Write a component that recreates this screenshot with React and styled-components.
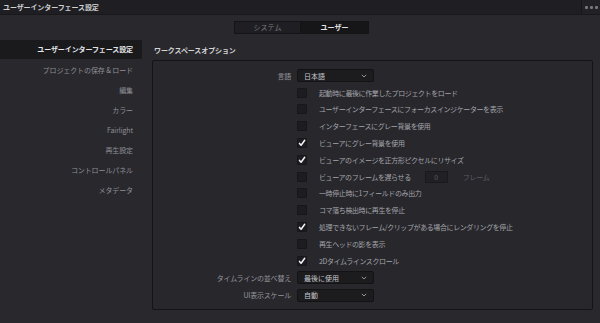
import React from 'react';
import styled, { createGlobalStyle } from 'styled-components';

const GlobalStyle = createGlobalStyle`
  html, body {
    margin: 0;
    padding: 0;
    background: #28282d;
  }

  body {
    font-family: "Noto Sans CJK JP", "Noto Sans", sans-serif;
    color: #a8a8ac;
    width: 600px;
    height: 323px;
    overflow: hidden;
  }
`;

const Window = styled.div`
  display: flex;
  flex-flow: column nowrap;
  width: 600px;
  height: 323px;
  background: #28282d;
`;

const TitleBar = styled.header`
  display: flex;
  align-items: center;
  height: 15px;
  flex: 0 0 15px;
  background: #1f1f23;
  border-bottom: 1px solid #19191c;
  box-sizing: border-box;
`;

const Title = styled.h1`
  flex: 1;
  margin: 0;
  padding-left: 3px;
  font-size: 7px;
  font-weight: 700;
  color: #d0d0d2;
  letter-spacing: -0.1px;
  line-height: 15px;
`;

const MoreButton = styled.div`
  display: flex;
  align-items: center;
  justify-content: center;
  gap: 2px;
  width: 18px;
  height: 100%;
  border-left: 1px solid #18181b;
  background: #222226;

  & span {
    width: 3px;
    height: 3px;
    border-radius: 1px;
    background: #76767c;
  }
`;

const TabRow = styled.div`
  display: flex;
  justify-content: center;
  padding: 6px 0 0 3px;
`;

const Tab = styled.button`
  width: ${({ $wide }) => ($wide ? '68px' : '67px')};
  height: 13px;
  padding: 0;
  border: 1px solid #141416;
  background: ${({ $active }) => ($active ? '#161618' : '#1f1f23')};
  color: ${({ $active }) => ($active ? '#e2e2e4' : '#7c7c82')};
  font-family: inherit;
  font-size: 7px;
  font-weight: ${({ $active }) => ($active ? 700 : 400)};
  line-height: 11px;

  & + & {
    border-left: none;
  }
`;

const Body = styled.div`
  display: flex;
  flex: 1;
  padding-top: 6px;
`;

const Sidebar = styled.nav`
  display: flex;
  flex-flow: column nowrap;
  width: 142px;
  flex: 0 0 142px;
`;

const NavItem = styled.div`
  height: ${({ $active }) => ($active ? '19px' : '20px')};
  margin-bottom: ${({ $active }) => ($active ? '1px' : '0')};
  padding-right: 9px;
  text-align: right;
  font-size: 7px;
  line-height: ${({ $active }) => ($active ? '19px' : '20px')};
  font-weight: ${({ $active }) => ($active ? 700 : 400)};
  color: ${({ $active }) => ($active ? '#e6e6e8' : '#8f8f95')};
  background: ${({ $active }) => ($active ? '#1a1a1d' : 'transparent')};
  letter-spacing: -0.1px;
`;

const Main = styled.main`
  display: flex;
  flex-flow: column nowrap;
  padding-left: 10px;
`;

const SectionTitle = styled.h2`
  margin: 0;
  height: 20px;
  padding-left: 2px;
  font-size: 7px;
  font-weight: 700;
  line-height: 20px;
  color: #d4d4d6;
  letter-spacing: -0.1px;
`;

const Panel = styled.section`
  box-sizing: border-box;
  width: 441px;
  height: 250px;
  padding-top: 6.5px;
  border: 1px solid #141416;
  border-radius: 2px;
  background: #27272c;
`;

const Row = styled.div`
  display: flex;
  align-items: center;
  height: ${({ $tall }) => ($tall ? '17.4px' : '16.8px')};
  gap: 6px;
`;

const Label = styled.span`
  width: 138px;
  flex: 0 0 138px;
  text-align: right;
  font-size: 7px;
  color: #95959b;
  letter-spacing: -0.2px;
`;

const Select = styled.div`
  display: flex;
  align-items: center;
  justify-content: space-between;
  box-sizing: border-box;
  width: 77px;
  height: 13px;
  padding: 0 6px;
  background: #1c1c1f;
  border: 1px solid #131315;
  border-radius: 2px;
  font-size: 7px;
  color: #c6c6ca;
`;

const Check = styled.span`
  display: flex;
  align-items: center;
  justify-content: center;
  box-sizing: border-box;
  width: 10px;
  height: 10px;
  flex: 0 0 10px;
  background: #1d1d21;
  border: 1px solid #17171a;
  border-radius: 1px;
`;

const CheckText = styled.span`
  margin-left: 6px;
  font-size: 7px;
  color: #a4a4aa;
  letter-spacing: -0.4px;
  white-space: nowrap;
`;

const NumberBox = styled.span`
  display: inline-flex;
  align-items: center;
  justify-content: center;
  box-sizing: border-box;
  width: 23px;
  height: 12px;
  margin-left: 8px;
  background: #212125;
  border: 1px solid #1a1a1d;
  font-size: 7px;
  color: #5d5d63;
`;

const Unit = styled.span`
  margin-left: 9px;
  font-size: 7px;
  color: #5d5d63;
  letter-spacing: -0.3px;
`;

const Chevron = () => (
  <svg width="6" height="4" viewBox="0 0 6 4" aria-hidden="true">
    <path d="M0.8 0.8 L3 3 L5.2 0.8" fill="none" stroke="#a0a0a6" strokeWidth="0.9" />
  </svg>
);

const Tick = () => (
  <svg width="8" height="8" viewBox="0 0 8 8" aria-hidden="true">
    <path d="M1.5 4.4 L3.1 6.3 L6.7 1.3" fill="none" stroke="#f4f4f6" strokeWidth="1.5" strokeLinecap="round" strokeLinejoin="round" />
  </svg>
);

const navItems = [
  'ユーザーインターフェース設定',
  'プロジェクトの保存 & ロード',
  '編集',
  'カラー',
  'Fairlight',
  '再生設定',
  'コントロールパネル',
  'メタデータ',
];

const checkOptions = [
  { text: '起動時に最後に作業したプロジェクトをロード', checked: false },
  { text: 'ユーザーインターフェースにフォーカスインジケーターを表示', checked: false },
  { text: 'インターフェースにグレー背景を使用', checked: false },
  { text: 'ビューアにグレー背景を使用', checked: true },
  { text: 'ビューアのイメージを正方形ピクセルにリサイズ', checked: true },
  { text: 'ビューアのフレームを遅らせる', checked: false, delay: true },
  { text: '一時停止時に1フィールドのみ出力', checked: false },
  { text: 'コマ落ち検出時に再生を停止', checked: false },
  { text: '処理できないフレーム/クリップがある場合にレンダリングを停止', checked: true },
  { text: '再生ヘッドの影を表示', checked: false },
  { text: '2Dタイムラインスクロール', checked: true },
];

const SelectRow = ({ label, value, tall }) => (
  <Row $tall={tall}>
    <Label>{label}</Label>
    <Select>
      {value}
      <Chevron />
    </Select>
  </Row>
);

const App = () => (
  <>
    <GlobalStyle />
    <Window>
      <TitleBar>
        <Title>ユーザーインターフェース設定</Title>
        <MoreButton>
          <span />
          <span />
          <span />
        </MoreButton>
      </TitleBar>

      <TabRow>
        <Tab>システム</Tab>
        <Tab $active $wide>ユーザー</Tab>
      </TabRow>

      <Body>
        <Sidebar>
          {navItems.map((item, i) => (
            <NavItem key={item} $active={i === 0}>
              {item}
            </NavItem>
          ))}
        </Sidebar>

        <Main>
          <SectionTitle>ワークスペースオプション</SectionTitle>
          <Panel>
            <SelectRow label="言語" value="日本語" />
            {checkOptions.map((opt) => (
              <Row key={opt.text}>
                <Label />
                <Check>{opt.checked && <Tick />}</Check>
                <CheckText>{opt.text}</CheckText>
                {opt.delay && (
                  <>
                    <NumberBox>0</NumberBox>
                    <Unit>フレーム</Unit>
                  </>
                )}
              </Row>
            ))}
            <SelectRow label="タイムラインの並べ替え" value="最後に使用" tall />
            <SelectRow label="UI表示スケール" value="自動" tall />
          </Panel>
        </Main>
      </Body>
    </Window>
  </>
);

export default App;
